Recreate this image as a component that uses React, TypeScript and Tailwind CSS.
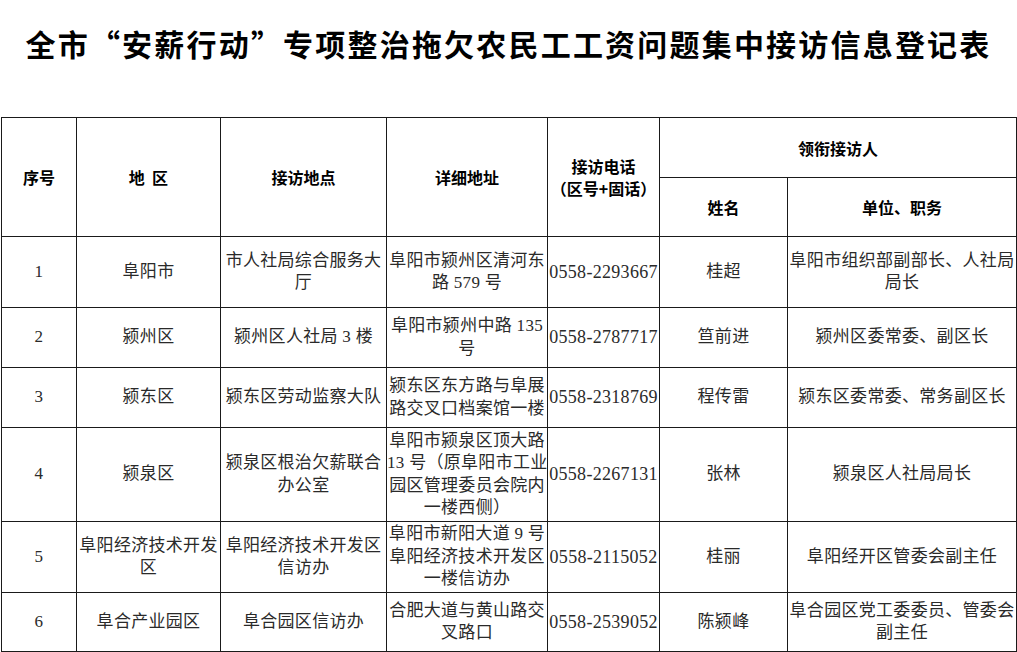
const body = "font-['Liberation_Serif','Noto_Sans_CJK_SC',serif] text-[17px] leading-[22.5px] text-[#2a2a2a] tracking-[0.3px]";
const head = "font-['Noto_Sans_CJK_SC',sans-serif] font-bold text-[16px] leading-[22px] text-black";
const cell = "border border-[#1a1a1a] text-center align-middle p-0 whitespace-nowrap";

type Row = {
  no: string;
  area: string[];
  place: string[];
  addr: string[];
  phone: string;
  name: string;
  post: string[];
  h: string;
};

const rows: Row[] = [
  {
    no: "1",
    area: ["阜阳市"],
    place: ["市人社局综合服务大", "厅"],
    addr: ["阜阳市颍州区清河东", "路 579 号"],
    phone: "0558-2293667",
    name: "桂超",
    post: ["阜阳市组织部副部长、人社局", "局长"],
    h: "h-[71px]",
  },
  {
    no: "2",
    area: ["颍州区"],
    place: ["颍州区人社局 3 楼"],
    addr: ["阜阳市颍州中路 135", "号"],
    phone: "0558-2787717",
    name: "笪前进",
    post: ["颍州区委常委、副区长"],
    h: "h-[60px]",
  },
  {
    no: "3",
    area: ["颍东区"],
    place: ["颍东区劳动监察大队"],
    addr: ["颍东区东方路与阜展", "路交叉口档案馆一楼"],
    phone: "0558-2318769",
    name: "程传雷",
    post: ["颍东区委常委、常务副区长"],
    h: "h-[60px]",
  },
  {
    no: "4",
    area: ["颍泉区"],
    place: ["颍泉区根治欠薪联合", "办公室"],
    addr: ["阜阳市颍泉区顶大路", "13 号（原阜阳市工业", "园区管理委员会院内", "一楼西侧）"],
    phone: "0558-2267131",
    name: "张林",
    post: ["颍泉区人社局局长"],
    h: "h-[94px]",
  },
  {
    no: "5",
    area: ["阜阳经济技术开发", "区"],
    place: ["阜阳经济技术开发区", "信访办"],
    addr: ["阜阳市新阳大道 9 号", "阜阳经济技术开发区", "一楼信访办"],
    phone: "0558-2115052",
    name: "桂丽",
    post: ["阜阳经开区管委会副主任"],
    h: "h-[71px]",
  },
  {
    no: "6",
    area: ["阜合产业园区"],
    place: ["阜合园区信访办"],
    addr: ["合肥大道与黄山路交", "叉路口"],
    phone: "0558-2539052",
    name: "陈颍峰",
    post: ["阜合园区党工委委员、管委会", "副主任"],
    h: "h-[59px]",
  },
];

function Lines({ items }: { items: string[] }) {
  return (
    <>
      {items.map((t, i) => (
        <div key={i}>{t}</div>
      ))}
    </>
  );
}

export default function App() {
  return (
    <div className="w-[1017px] h-[652px] bg-white overflow-hidden pt-[24px]">
      <h1 className="text-center font-['Noto_Sans_CJK_SC',sans-serif] font-bold text-[30px] leading-[38px] tracking-[2.2px] text-black">
        全市“安薪行动”专项整治拖欠农民工工资问题集中接访信息登记表
      </h1>
      <table className="mt-[55px] ml-[1px] border-collapse table-fixed w-[1015px]">
        <colgroup>
          <col className="w-[75px]" />
          <col className="w-[144px]" />
          <col className="w-[166px]" />
          <col className="w-[161px]" />
          <col className="w-[112px]" />
          <col className="w-[128px]" />
          <col className="w-[229px]" />
        </colgroup>
        <thead>
          <tr className="h-[60px]">
            <th rowSpan={2} className={`${cell} ${head}`}>序号</th>
            <th rowSpan={2} className={`${cell} ${head}`}>地&nbsp;&nbsp;区</th>
            <th rowSpan={2} className={`${cell} ${head}`}>接访地点</th>
            <th rowSpan={2} className={`${cell} ${head}`}>详细地址</th>
            <th rowSpan={2} className={`${cell} ${head}`}>
              <div>接访电话</div>
              <div>（区号+固话）</div>
            </th>
            <th colSpan={2} className={`${cell} ${head}`}>领衔接访人</th>
          </tr>
          <tr className="h-[59px]">
            <th className={`${cell} ${head}`}>姓名</th>
            <th className={`${cell} ${head}`}>单位、职务</th>
          </tr>
        </thead>
        <tbody>
          {rows.map((r) => (
            <tr key={r.no} className={r.h}>
              <td className={`${cell} ${body}`}>{r.no}</td>
              <td className={`${cell} ${body}`}><Lines items={r.area} /></td>
              <td className={`${cell} ${body}`}><Lines items={r.place} /></td>
              <td className={`${cell} ${body}`}><Lines items={r.addr} /></td>
              <td className={`${cell} ${body} text-[18px] tracking-[0.2px]`}>{r.phone}</td>
              <td className={`${cell} ${body}`}>{r.name}</td>
              <td className={`${cell} ${body}`}><Lines items={r.post} /></td>
            </tr>
          ))}
        </tbody>
      </table>
    </div>
  );
}
